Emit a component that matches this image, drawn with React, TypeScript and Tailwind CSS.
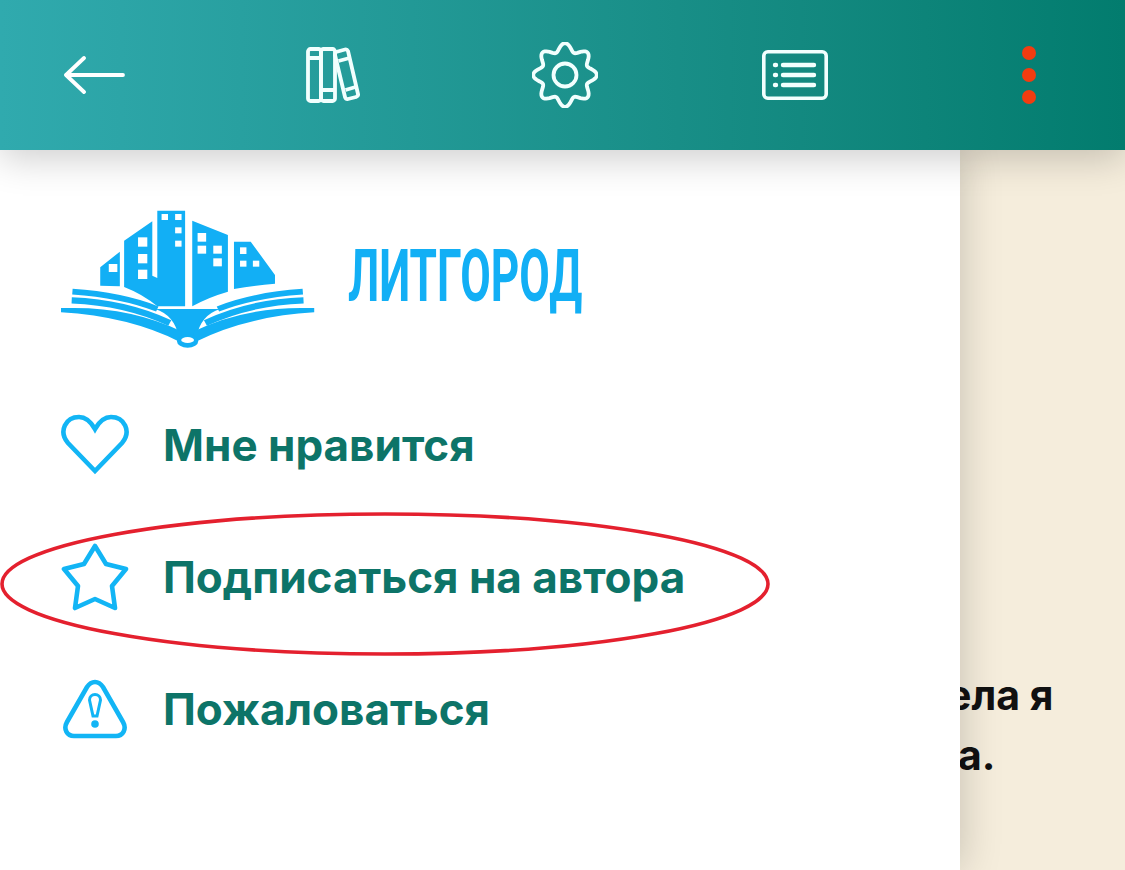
import React from 'react';

const gearPath = (() => {
  const pts: string[] = [];
  for (let i = 0; i < 160; i++) {
    const a = (i / 160) * Math.PI * 2;
    const r = 27.8 + 4 * Math.cos(8 * a);
    pts.push(`${(33 + r * Math.sin(a)).toFixed(2)} ${(33 - r * Math.cos(a)).toFixed(2)}`);
  }
  return `M${pts.join('L')}Z`;
})();

const BookPages = () => (
  <g>
    <path d="M92 288Q230 298 330 340" fill="none" stroke="#12aff5" strokeWidth="17" />
    <path d="M90 314Q240 320 365 382" fill="none" stroke="#12aff5" strokeWidth="19" />
    <path d="M60 337H92Q260 336 400 408L392 438Q250 362 60 350Z" fill="#12aff5" />
  </g>
);

const Logo = () => (
  <svg viewBox="60 40 715 420" preserveAspectRatio="none" className="w-[255px] h-[140px] shrink-0">
    <g fill="#12aff5">
      <path d="M170 215L225 168V272Q195 270 170 270Z" />
      <path d="M237 135L316 77V240L330 247V45H408V332H330Q290 296 237 274Z" />
      <path d="M428 75L528 118V288Q470 306 428 332Z" />
      <path d="M545 138H592L660 238V264Q600 270 545 280Z" />
      <path d="M325 340Q380 360 390 425H440Q450 360 505 340Z" />
    </g>
    <g fill="#fff">
      <rect x="342" y="55" width="18" height="18" />
      <rect x="380" y="55" width="18" height="18" />
      <rect x="380" y="95" width="18" height="18" />
      <rect x="380" y="135" width="18" height="18" />
      <rect x="276" y="125" width="26" height="28" />
      <rect x="276" y="175" width="26" height="28" />
      <rect x="276" y="222" width="26" height="28" />
      <rect x="194" y="205" width="24" height="24" />
      <rect x="443" y="112" width="24" height="26" />
      <rect x="443" y="150" width="24" height="24" />
      <rect x="487" y="150" width="24" height="24" />
      <rect x="487" y="188" width="24" height="24" />
      <rect x="562" y="155" width="18" height="20" />
      <rect x="562" y="195" width="18" height="18" />
      <rect x="598" y="195" width="18" height="18" />
    </g>
    <BookPages />
    <g transform="matrix(-1 0 0 1 830 0)">
      <BookPages />
    </g>
    <ellipse cx="415" cy="436" rx="30" ry="20" fill="#12aff5" />
    <ellipse cx="415" cy="433" rx="18" ry="9" fill="#fff" />
  </svg>
);

const HeartIcon = () => (
  <svg viewBox="0 0 68 62" className="w-[68px] h-[62px]" fill="none" stroke="#12b5f5" strokeWidth="4.600" strokeLinejoin="miter">
    <path d="M34 57L7 29C-3 17 5 3 18 3C25 3 30 8 34 15C38 8 43 3 50 3C63 3 71 17 61 29Z" />
  </svg>
);

const StarIcon = () => (
  <svg viewBox="0 0 68 68" className="w-[68px] h-[68px]" fill="none" stroke="#12b5f5" strokeWidth="4.600" strokeLinejoin="round">
    <path d="M34 3L45 21L65 26L51 43L54 65L34 56L14 65L17 43L3 26L23 21Z" />
  </svg>
);

const WarnIcon = () => (
  <svg viewBox="0 0 66 60" className="w-[66px] h-[60px]" fill="none" stroke="#12b5f5" strokeWidth="4.600">
    <path d="M33 3C36 3 39 5 41 8L61 43C65 50 61 57 54 57H12C5 57 1 50 5 43L25 8C27 5 30 3 33 3Z" />
    <path d="M27.500 21a5.500 5.500 0 0 1 11 0L35 37H31Z" strokeWidth="3" />
    <circle cx="33" cy="45" r="3.800" fill="#12b5f5" stroke="none" />
  </svg>
);

const menu = [
  { label: 'Мне нравится', icon: <HeartIcon /> },
  { label: 'Подписаться на автора', icon: <StarIcon /> },
  { label: 'Пожаловаться', icon: <WarnIcon /> },
];

export default function App() {
  return (
    <div className="relative w-[1125px] h-[870px] overflow-hidden bg-[#f5eddc] font-['Inter',sans-serif]">
      {/* Top bar */}
      <header className="relative z-20 h-[150px] flex items-center bg-gradient-to-r from-[#30aaae] to-[#027c6e] shadow-[0_8px_36px_rgba(0,0,0,0.2)]">
        <svg viewBox="0 0 61 38" className="ml-[64px] w-[61px] h-[38px]" fill="none" stroke="#fff" strokeWidth="3.800" strokeLinecap="round" strokeLinejoin="round">
          <path d="M2 19H59M20 2L2 19L20 36" />
        </svg>
        <svg viewBox="0 0 54 56" className="ml-[181px] w-[54px] h-[56px]" fill="none" stroke="#f2fffe" strokeWidth="3.800" strokeLinejoin="round">
          <rect x="2" y="2" width="13" height="52" rx="2.500" />
          <rect x="15" y="2" width="14" height="52" rx="2.500" />
          <path d="M2 11H15M15 43H29" />
          <path d="M30 5L39 2.500Q41 2 42 4L52 47Q52.500 49 50 50L42 52Q40 52.500 39 50L29 8Q29 6 30 5Z" />
          <path d="M32.500 14L43.500 11M39.500 43L49.500 40" />
        </svg>
        <svg viewBox="0 0 66 66" className="ml-[172px] w-[66px] h-[66px]" fill="none" stroke="#f2fffe" strokeWidth="3.800">
          <path d={gearPath} />
          <circle cx="33" cy="33" r="11.500" />
        </svg>
        <svg viewBox="0 0 66 50" className="ml-[164px] w-[66px] h-[50px]" fill="none" stroke="#f2fffe" strokeWidth="3.600">
          <rect x="1.800" y="1.800" width="62.400" height="46.400" rx="4" />
          <path d="M21 15H52M21 25H52M21 35H52" strokeWidth="4.400" strokeLinecap="round" />
          <path d="M13 15h1M13 25h1M13 35h1" strokeWidth="4.400" strokeLinecap="round" />
        </svg>
        <div className="ml-[194px] flex flex-col gap-2">
          <span className="w-3.5 h-3.5 rounded-full bg-[#f23c10]" />
          <span className="w-3.5 h-3.5 rounded-full bg-[#f23c10]" />
          <span className="w-3.5 h-3.5 rounded-full bg-[#f23c10]" />
        </div>
      </header>

      <div className="flex h-[720px]">
        {/* Drawer */}
        <aside className="relative z-10 w-[960px] shrink-0 bg-white shadow-[0_0_40px_rgba(0,0,0,0.2)] pl-[61px] pt-[59px]">
          <div className="flex items-center">
            <Logo />
            <span className="ml-[32px] -mt-[4px] w-[234px] origin-left scale-x-[0.615] whitespace-nowrap font-['Roboto',sans-serif] text-[72px] leading-none font-bold text-[#12aff5]">
              ЛИТГОРОД
            </span>
          </div>
          <ul className="mt-[62px] flex flex-col gap-[64px]">
            {menu.map((item) => (
              <li key={item.label} className="flex items-center h-[68px]">
                <span className="w-[68px] flex justify-center shrink-0">{item.icon}</span>
                <span className="ml-[34px] text-[44px] font-bold leading-none text-[#0d7468] whitespace-nowrap">{item.label}</span>
              </li>
            ))}
          </ul>
        </aside>

        {/* Book page behind the drawer */}
        <main className="flex-1 overflow-hidden pt-[515px] text-[41px] font-bold leading-[60px] text-[#111] whitespace-nowrap">
          <p className="-ml-[13px]">ела я</p>
          <p className="-ml-[2px]">а.</p>
        </main>
      </div>

      {/* Red hand-drawn ring */}
      <svg viewBox="0 0 770 150" className="absolute z-30 left-0 top-[511px] w-[770px] h-[150px]" fill="none" stroke="#e4202e" strokeWidth="3.600">
        <ellipse cx="385" cy="73" rx="383" ry="70" />
      </svg>
    </div>
  );
}
